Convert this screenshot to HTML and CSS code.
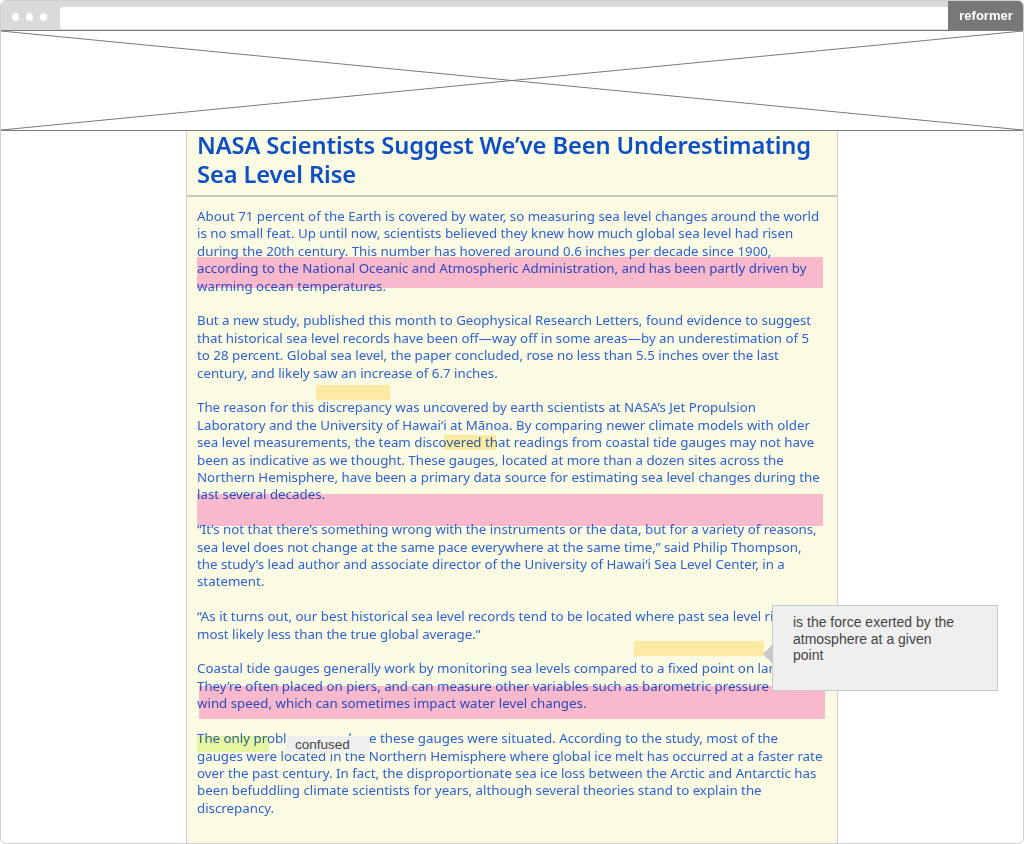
FILE: index.html
```html
<!DOCTYPE html>
<html>
<head>
<meta charset="utf-8">
<link rel="stylesheet" href="styles.css">
</head>
<body>
<div class="window">
  <div class="topbar">
    <div class="dots"><span></span><span></span><span></span></div>
    <div class="address"></div>
    <div class="brand">reformer</div>
  </div>
  <div class="placeholder">
    <svg class="xlines" viewBox="0 0 1022 99" preserveAspectRatio="none">
      <line x1="0" y1="0" x2="1022" y2="99" />
      <line x1="0" y1="99" x2="1022" y2="0" />
    </svg>
  </div>
  <div class="stage">
    <article class="article">
      <header class="article-head">
        <h1>NASA Scientists Suggest We’ve Been Underestimating Sea Level Rise</h1>
      </header>
      <div class="article-body">
        <p>About 71 percent of the Earth is covered by water, so measuring sea level changes around the world is no small feat. Up until now, scientists believed they knew how much global sea level had risen during the 20th century. This number has hovered around 0.6 inches per decade since 1900, according to the National Oceanic and Atmospheric Administration, and has been partly driven by warming ocean temperatures.</p>
        <p>But a new study, published this month to Geophysical Research Letters, found evidence to suggest that historical sea level records have been off—way off in some areas—by an underestimation of 5 to 28 percent. Global sea level, the paper concluded, rose no less than 5.5 inches over the last century, and likely saw an increase of 6.7 inches.</p>
        <p>The reason for this discrepancy was uncovered by earth scientists at NASA’s Jet Propulsion Laboratory and the University of Hawai‘i at Mānoa. By comparing newer climate models with older sea level measurements, the team discovered that readings from coastal tide gauges may not have been as indicative as we thought. These gauges, located at more than a dozen sites across the Northern Hemisphere, have been a primary data source for estimating sea level changes during the last several decades.</p>
        <p>“It’s not that there’s something wrong with the instruments or the data, but for a variety of reasons, sea level does not change at the same pace everywhere at the same time,” said Philip Thompson, the study’s lead author and associate director of the University of Hawai‘i Sea Level Center, in a statement.</p>
        <p>“As it turns out, our best historical sea level records tend to be located where past sea level rise was most likely less than the true global average.”</p>
        <p>Coastal tide gauges generally work by monitoring sea levels compared to a fixed point on land. They’re often placed on piers, and can measure other variables such as barometric pressure and wind speed, which can sometimes impact water level changes.</p>
        <p>The only problem was where these gauges were situated. According to the study, most of the gauges were located in the Northern Hemisphere where global ice melt has occurred at a faster rate over the past century. In fact, the disproportionate sea ice loss between the Arctic and Antarctic has been befuddling climate scientists for years, although several theories stand to explain the discrepancy.</p>
      </div>

      <div class="mark mark-pink mark-p1"></div>
      <div class="mark mark-pink mark-p2"></div>
      <div class="mark mark-pink mark-p3"></div>
      <div class="mark mark-yellow mark-y1"></div>
      <div class="mark mark-yellow mark-y2"></div>
      <div class="mark mark-yellow mark-y3"></div>
      <div class="mark mark-green mark-g1"></div>
      <div class="tag">confused</div>
      <div class="tooltip">is the force exerted by the atmosphere at a given point</div>
    </article>
  </div>
</div>
</body>
</html>
```

FILE: styles.css
```css
html, body {
  margin: 0;
  padding: 0;
  background: #ffffff;
}

body {
  width: 1024px;
  height: 844px;
  overflow: hidden;
}

.window {
  box-sizing: border-box;
  width: 1024px;
  height: 844px;
  border: 1px solid #cfcfcf;
  border-radius: 6px;
  overflow: hidden;
  display: flex;
  flex-direction: column;
  background: #ffffff;
}

.topbar {
  height: 29px;
  flex: none;
  background: #dadada;
  display: flex;
  align-items: stretch;
}

.dots {
  display: flex;
  align-items: center;
  gap: 7px;
  padding: 0 8px 0 11px;
  margin-top: 2px;
}

.dots span {
  width: 7px;
  height: 8px;
  border-radius: 50%;
  background: #ffffff;
}

.address {
  flex: 1;
  margin: 6px 0 1px 5px;
  background: #ffffff;
  border-radius: 3px 0 0 3px;
}

.brand {
  width: 76px;
  margin: -1px -1px 0 0;
  background: #76787a;
  color: #ffffff;
  font-family: "Liberation Sans", Arial, sans-serif;
  font-weight: bold;
  font-size: 13px;
  display: flex;
  align-items: center;
  justify-content: center;
  padding-top: 1px;
}

.placeholder {
  flex: none;
  height: 99px;
  border-top: 1px solid #7a7a7a;
  border-bottom: 1px solid #7a7a7a;
  position: relative;
}

.xlines {
  display: block;
  width: 100%;
  height: 100%;
}

.xlines line {
  stroke: #7a7a7a;
  stroke-width: 1;
}

.stage {
  flex: 1;
  display: flex;
  justify-content: center;
  min-height: 0;
}

.article {
  position: relative;
  width: 650px;
  background: #fbfbe3;
  border-left: 1px solid #cfcfcf;
  border-right: 1px solid #cfcfcf;
  font-family: "Noto Sans", sans-serif;
}

.article-head {
  padding: 0 10px 6px 10px;
  border-bottom: 2px solid #c8c8c8;
}

.article-head h1 {
  margin: 0;
  font-size: 23.7px;
  line-height: 29px;
  font-weight: 600;
  color: #0d4fc5;
  letter-spacing: -0.1px;
}

.article-body {
  padding: 11px 12px 0 10px;
  font-size: 13.3px;
  line-height: 17.4px;
  color: #2d62d2;
}

.article-body p {
  margin: 0 0 17.4px 0;
}

.mark {
  position: absolute;
}

.mark-pink {
  background: #fdbce6;
  mix-blend-mode: multiply;
}

.mark-yellow {
  background: #ffeeb8;
  mix-blend-mode: multiply;
}

.mark-green {
  background: #e9f9b4;
  mix-blend-mode: multiply;
}

.mark-p1 { left: 10px; top: 126px; width: 626px; height: 31px; }
.mark-p2 { left: 10px; top: 363px; width: 626px; height: 32px; }
.mark-p3 { left: 12px; top: 555px; width: 626px; height: 33px; }
.mark-y1 { left: 129px; top: 254px; width: 74px; height: 15px; }
.mark-y2 { left: 257px; top: 304px; width: 52px; height: 15px; }
.mark-y3 { left: 447px; top: 510px; width: 130px; height: 15px; }
.mark-g1 { left: 10px; top: 605px; width: 72px; height: 16px; }

.tag {
  position: absolute;
  left: 100px;
  top: 605px;
  width: 75px;
  height: 17px;
  padding-left: 8px;
  background: #efefef;
  color: #444444;
  font-family: "Liberation Sans", Arial, sans-serif;
  font-size: 13.5px;
  line-height: 17px;
}

.tooltip {
  position: absolute;
  left: 585px;
  top: 474px;
  box-sizing: border-box;
  width: 226px;
  height: 86px;
  padding: 8px 38px 0 20px;
  background: #efefef;
  border: 1px solid #c8c8c8;
  color: #444444;
  font-family: "Liberation Sans", Arial, sans-serif;
  font-size: 14px;
  line-height: 16.5px;
}

.tooltip::before {
  content: "";
  position: absolute;
  left: -10px;
  top: 39px;
  border-style: solid;
  border-width: 9px 9px 9px 0;
  border-color: transparent #c8c8c8 transparent transparent;
}
```
